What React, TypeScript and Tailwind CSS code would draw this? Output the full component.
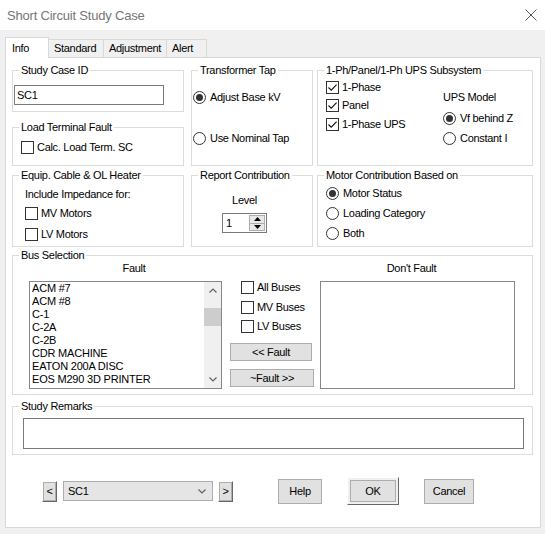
import React from 'react';

const Check = ({ checked = false }: { checked?: boolean }) => (
  <span className="flex h-[13px] w-[13px] shrink-0 items-center justify-center border border-[#333] bg-white">
    {checked && (
      <svg width="11" height="11" viewBox="0 0 11 11">
        <path d="M1.5 5.5 L4.2 8.2 L9.6 2.6" fill="none" stroke="#111" strokeWidth="1.1" />
      </svg>
    )}
  </span>
);

const Radio = ({ on = false }: { on?: boolean }) => (
  <span className="flex h-[13px] w-[13px] shrink-0 items-center justify-center rounded-full border border-[#333] bg-white">
    {on && <span className="h-[7px] w-[7px] rounded-full bg-[#333]" />}
  </span>
);

const CheckRow = ({ label, checked, className = '' }: { label: string; checked?: boolean; className?: string }) => (
  <div className={`flex h-[13px] items-center gap-[3px] ${className}`}>
    <Check checked={checked} />
    <span>{label}</span>
  </div>
);

const RadioRow = ({ label, on, className = '' }: { label: string; on?: boolean; className?: string }) => (
  <div className={`flex h-[13px] items-center gap-[4px] ${className}`}>
    <Radio on={on} />
    <span>{label}</span>
  </div>
);

const Group = ({ title, className = '', children }: { title: string; className?: string; children?: React.ReactNode }) => (
  <fieldset className={`min-w-0 border border-[#dcdcdc] ${className}`}>
    <legend className="ml-[6px] px-[2px] leading-[13px]">{title}</legend>
    {children}
  </fieldset>
);

const FlatButton = ({ label, className = '' }: { label: string; className?: string }) => (
  <button className={`flex items-center justify-center border border-[#adadad] bg-[#e1e1e1] ${className}`}>{label}</button>
);

const RaisedButton = ({ label, className = '', inner = 'p-[1px]' }: { label: string; className?: string; inner?: string }) => (
  <div className={`flex border border-t-white border-l-white border-r-[#696969] border-b-[#696969] bg-[#f0f0f0] ${inner} ${className}`}>
    <button className="flex flex-1 items-center justify-center border border-[#adadad] bg-[#e1e1e1]">{label}</button>
  </div>
);

const Chevron = ({ up = false }: { up?: boolean }) => (
  <svg width="8" height="5" viewBox="0 0 8 5">
    <path d={up ? 'M0.5 4.5 L4 1 L7.5 4.5' : 'M0.5 0.5 L4 4 L7.5 0.5'} fill="none" stroke="#606060" strokeWidth="1.2" />
  </svg>
);

const faultBuses = ['ACM #7', 'ACM #8', 'C-1', 'C-2A', 'C-2B', 'CDR MACHINE', 'EATON 200A DISC', 'EOS M290 3D PRINTER'];

export default function App() {
  return (
    <div className="h-[534px] w-[545px] overflow-hidden bg-[#f0f0f0] font-['Liberation_Sans',Arial,sans-serif] text-[11px] leading-[13px] tracking-[-0.3px] text-black">
      {/* title bar */}
      <div className="flex h-[30px] items-center justify-between bg-white pl-[7px] pr-[8px]">
        <span className="text-[13px] tracking-[-0.2px] text-[#767676]">Short Circuit Study Case</span>
        <svg width="12" height="12" viewBox="0 0 12 12">
          <path d="M0.5 0.5 L11.5 11.5 M11.5 0.5 L0.5 11.5" stroke="#555" strokeWidth="1" />
        </svg>
      </div>

      {/* tabs */}
      <div className="mt-[7px] flex h-[20px] items-end pl-[5px]">
        <div className="relative z-10 -mb-px flex h-[21px] w-[44px] items-center border border-b-0 border-[#d9d9d9] bg-white pl-[6px]">Info</div>
        <div className="flex h-[18px] w-[55px] items-center border border-b-0 border-l-0 border-[#d9d9d9] pl-[5px]">Standard</div>
        <div className="flex h-[18px] w-[63px] items-center border border-b-0 border-l-0 border-[#d9d9d9] pl-[5px]">Adjustment</div>
        <div className="flex h-[18px] w-[40px] items-center border border-b-0 border-l-0 border-[#d9d9d9] pl-[5px]">Alert</div>
      </div>

      {/* tab page */}
      <div className="ml-[5px] h-[471px] w-[536px] border border-[#d9d9d9] bg-white pl-[6px] pt-[6px]">
        {/* row 1 */}
        <div className="flex h-[102px]">
          <div className="flex w-[172px] flex-col">
            <Group title="Study Case ID" className="h-[48px]">
              <div className="ml-[1px] mt-[8px] flex h-[20px] w-[150px] items-center border border-[#7a7a7a] bg-white pl-[2px]">SC1</div>
            </Group>
            <Group title="Load Terminal Fault" className="mt-[9px] h-[45px]">
              <CheckRow label="Calc. Load Term. SC" className="ml-[8px] mt-[7px]" />
            </Group>
          </div>
          <Group title="Transformer Tap" className="ml-[7px] h-full w-[122px]">
            <RadioRow label="Adjust Base kV" on className="ml-[1px] mt-[14px]" />
            <RadioRow label="Use Nominal Tap" className="ml-[1px] mt-[28px]" />
          </Group>
          <Group title="1-Ph/Panel/1-Ph UPS Subsystem" className="ml-[4px] h-full w-[216px]">
            <div className="flex">
              <div className="ml-[8px] w-[117px]">
                <CheckRow label="1-Phase" checked className="mt-[4px]" />
                <CheckRow label="Panel" checked className="mt-[5px]" />
                <CheckRow label="1-Phase UPS" checked className="mt-[6px]" />
              </div>
              <div>
                <div className="mt-[14px]">UPS Model</div>
                <RadioRow label="Vf behind Z" on className="mt-[8px]" />
                <RadioRow label="Constant I" className="mt-[7px]" />
              </div>
            </div>
          </Group>
        </div>

        {/* row 2 */}
        <div className="mt-[3px] flex h-[78px]">
          <Group title="Equip. Cable & OL Heater" className="h-full w-[172px]">
            <div className="ml-[12px] mt-[6px]">Include Impedance for:</div>
            <CheckRow label="MV Motors" className="ml-[12px] mt-[6px]" />
            <CheckRow label="LV Motors" className="ml-[12px] mt-[8px]" />
          </Group>
          <Group title="Report Contribution" className="ml-[7px] h-full w-[122px]">
            <div className="ml-[30px] w-[45px]">
              <div className="mt-[12px] text-center">Level</div>
              <div className="mt-[6px] flex h-[20px] border border-[#7a7a7a] bg-white">
                <div className="flex flex-1 items-center pl-[3px]">1</div>
                <div className="flex w-[17px] flex-col py-[1px] pr-[1px]">
                  <div className="flex flex-1 items-center justify-center border border-[#adadad] bg-[#e8e8e8]">
                    <svg width="7" height="4" viewBox="0 0 7 4"><path d="M0 4 L3.5 0 L7 4 Z" fill="#000" /></svg>
                  </div>
                  <div className="flex flex-1 items-center justify-center border border-t-0 border-[#adadad] bg-[#e8e8e8]">
                    <svg width="7" height="4" viewBox="0 0 7 4"><path d="M0 0 L3.5 4 L7 0 Z" fill="#000" /></svg>
                  </div>
                </div>
              </div>
            </div>
          </Group>
          <Group title="Motor Contribution Based on" className="ml-[4px] h-full w-[216px]">
            <RadioRow label="Motor Status" on className="ml-[8px] mt-[5px]" />
            <RadioRow label="Loading Category" className="ml-[8px] mt-[7px]" />
            <RadioRow label="Both" className="ml-[8px] mt-[7px]" />
          </Group>
        </div>

        {/* bus selection */}
        <Group title="Bus Selection" className="mt-[2px] h-[146px] w-[521px]">
          <div className="flex h-[13px]">
            <div className="ml-[16px] w-[210px] text-center">Fault</div>
            <div className="ml-[81px] w-[183px] text-center">Don&apos;t Fault</div>
          </div>
          <div className="mt-[6px] flex">
            <div className="ml-[16px] flex h-[108px] w-[193px] border border-[#828790] bg-white">
              <div className="flex-1 overflow-hidden pl-[2px] tracking-[-0.2px]">
                {faultBuses.map((b) => (
                  <div key={b} className="h-[13px] whitespace-nowrap">{b}</div>
                ))}
              </div>
              <div className="flex w-[17px] flex-col bg-[#f0f0f0]">
                <div className="flex h-[17px] items-center justify-center"><Chevron up /></div>
                <div className="mt-[9px] h-[18px] bg-[#cdcdcd]" />
                <div className="flex-1" />
                <div className="flex h-[17px] items-center justify-center"><Chevron /></div>
              </div>
            </div>
            <div className="ml-[8px] w-[90px]">
              <CheckRow label="All Buses" className="ml-[11px]" />
              <CheckRow label="MV Buses" className="ml-[11px] mt-[7px]" />
              <CheckRow label="LV Buses" className="ml-[11px] mt-[6px]" />
              <FlatButton label="<< Fault" className="mt-[10px] h-[18px] w-[82px]" />
              <FlatButton label="~Fault >>" className="mt-[8px] h-[18px] w-[84px]" />
            </div>
            <div className="h-[108px] w-[195px] border border-[#828790] bg-white" />
          </div>
        </Group>

        {/* remarks */}
        <Group title="Study Remarks" className="mt-[5px] h-[55px] w-[521px]">
          <div className="ml-[10px] mt-[5px] h-[31px] w-[501px] border border-[#7a7a7a] bg-white" />
        </Group>

        {/* bottom buttons */}
        <div className="mt-[22px] flex h-[28px] items-center">
          <RaisedButton label="<" className="ml-[30px] h-[21px] w-[15px]" inner="p-0" />
          <div className="ml-[6px] flex h-[20px] w-[150px] items-center justify-between border border-[#adadad] bg-[#e5e5e5] pl-[4px] pr-[6px]">
            <span>SC1</span>
            <Chevron />
          </div>
          <RaisedButton label=">" className="ml-[5px] h-[21px] w-[15px]" inner="p-0" />
          <FlatButton label="Help" className="ml-[45px] h-[25px] w-[44px]" />
          <RaisedButton label="OK" className="ml-[25px] h-[28px] w-[52px]" inner="p-[2px]" />
          <FlatButton label="Cancel" className="ml-[25px] h-[25px] w-[50px]" />
        </div>
      </div>
    </div>
  );
}
